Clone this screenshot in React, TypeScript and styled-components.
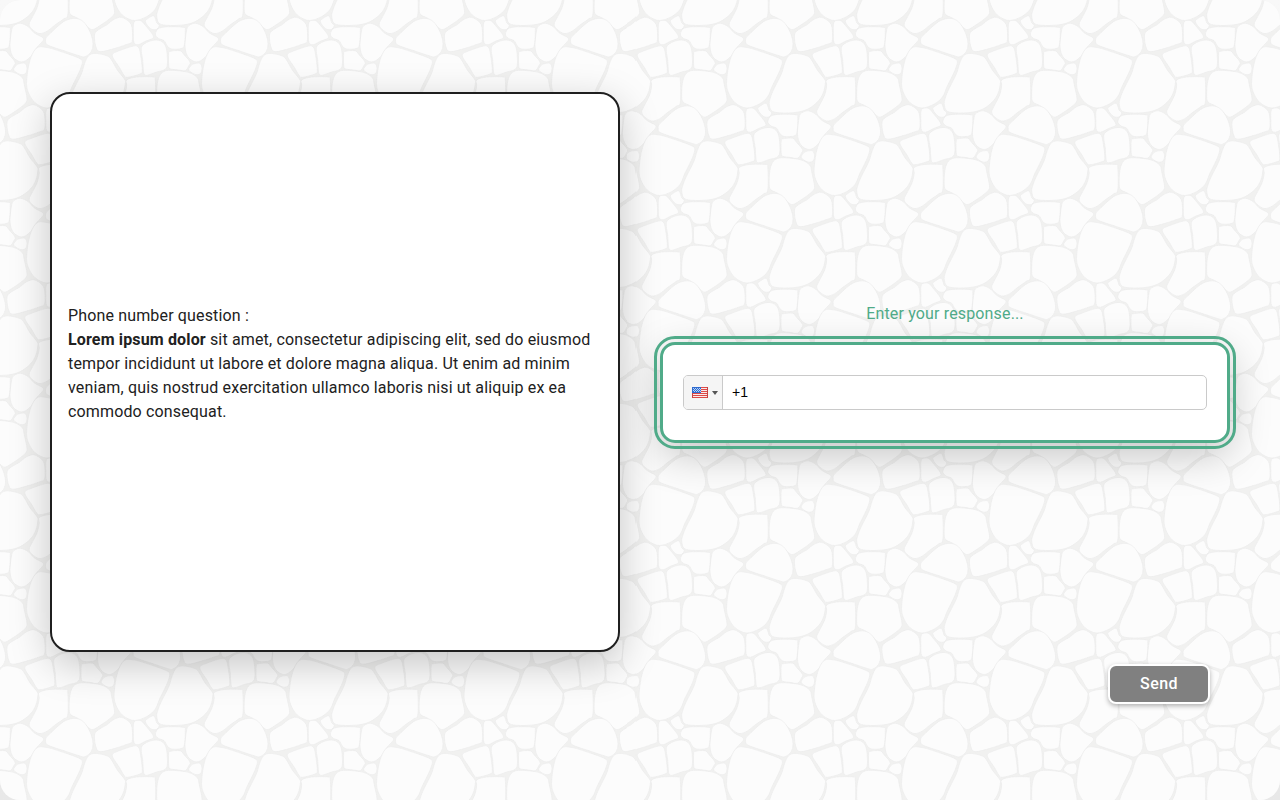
import React, { useState } from 'react';
import styled, { createGlobalStyle } from 'styled-components';

type Point = [number, number];

const deepShadow = '0 12px 40px rgba(0, 0, 0, 0.22)';

const GlobalStyle = createGlobalStyle`
  *, *::before, *::after { box-sizing: border-box; }
  body {
    margin: 0;
    background: #ffffff;
    color: #212121;
    font-family: Roboto, "Liberation Sans", sans-serif;
    font-size: 16px;
    line-height: 24px;
    letter-spacing: 0.00938em;
  }
`;

const Backdrop = styled.div`
  background: linear-gradient(#f8f8f8, #e8e8e8);
`;

const Page = styled.div`
  position: relative;
  min-height: 100vh;
  border-radius: 20px;
  overflow: hidden;
  background: #f1f1f0;
`;

const PebbleLayer = styled.svg`
  position: absolute;
  inset: 0;
  width: 100%;
  height: 100%;
  pointer-events: none;
`;

const Content = styled.main`
  position: relative;
  display: grid;
  grid-template-columns: 1fr 1fr;
  column-gap: 40px;
  padding: 92px 50px 0;
`;

const QuestionCard = styled.section`
  display: flex;
  flex-direction: column;
  justify-content: center;
  height: 70vh;
  padding: 0 16px 16px;
  border: 2px solid #1f1f1f;
  border-radius: 20px;
  background: #ffffff;
  box-shadow: ${deepShadow};
`;

const QuestionText = styled.p`
  margin: 0;
`;

const AnswerColumn = styled.section`
  display: flex;
  flex-direction: column;
  justify-content: center;
  height: 70vh;
`;

const AnswerLabel = styled.label`
  margin-bottom: 15px;
  color: #50ab89;
  line-height: 26px;
  text-align: center;
`;

const AnswerBox = styled.div`
  padding: 30px 20px;
  border: 3px solid #50ab89;
  border-radius: 15px;
  outline: 3px solid #50ab89;
  outline-offset: 3px;
  background: #ffffff;
  box-shadow: ${deepShadow};
`;

const PhoneField = styled.div`
  display: flex;
  height: 35px;
  border: 1px solid #cacaca;
  border-radius: 5px;
  overflow: hidden;
  background: #ffffff;
`;

const CountryButton = styled.button`
  display: flex;
  align-items: center;
  gap: 4px;
  width: 39px;
  padding: 0 0 0 8px;
  border: 0;
  border-right: 1px solid #cacaca;
  background: #f5f5f5;
`;

const Caret = styled.span`
  border-left: 3px solid transparent;
  border-right: 3px solid transparent;
  border-top: 4px solid #555555;
`;

const PhoneInput = styled.input`
  flex: 1;
  min-width: 0;
  padding: 0 9px 2px;
  border: 0;
  outline: 0;
  background: transparent;
  color: #000000;
  font-family: "Liberation Sans", Arial, sans-serif;
  font-size: 14px;
  letter-spacing: 0.01rem;
`;

const Actions = styled.div`
  grid-column: 2;
  display: flex;
  justify-content: flex-end;
  padding: 12px 20px;
`;

const SendButton = styled.button`
  width: 102px;
  height: 40px;
  padding: 0 0 2px;
  border: 2px solid #ffffff;
  border-radius: 8px;
  background: #808080;
  box-shadow: 0 2px 5px rgba(0, 0, 0, 0.3);
  color: #ffffff;
  font-family: inherit;
  font-size: 16px;
  font-weight: 500;
  letter-spacing: 0.02857em;
`;

const STONES: { x: number; y: number; points: Point[] }[] = [
  { x: 240, y: 90, points: [[50, 54], [78, 52], [112, 61], [150, 74], [180, 86], [187, 98], [176, 130], [157, 168], [143, 200], [118, 222], [80, 234], [45, 218], [24, 185], [20, 150], [30, 90]] },
  { x: 240, y: 90, points: [[225, 70], [262, 78], [276, 92], [292, 120], [314, 148], [316, 160], [310, 188], [294, 214], [262, 238], [220, 248], [162, 246], [148, 225], [152, 200], [166, 168], [184, 132], [194, 100], [205, 78]] },
  { x: 510, y: 195, points: [[50, 45], [80, 36], [130, 36], [136, 45], [136, 112], [124, 124], [97, 143], [74, 161], [50, 168], [28, 155], [20, 140], [30, 118], [44, 90], [50, 62]] },
  { x: 510, y: 195, points: [[165, 18], [190, 16], [235, 22], [262, 38], [268, 60], [276, 100], [272, 114], [256, 128], [236, 142], [212, 156], [200, 152], [185, 138], [165, 122], [145, 112], [140, 95], [142, 55], [150, 30]] },
  { x: 0, y: 0, points: [[405, 55], [430, 65], [450, 95], [459, 130], [453, 156], [435, 170], [420, 168], [380, 155], [325, 136], [317, 124], [319, 112], [331, 100], [352, 80], [376, 62]] },
  { x: 450, y: 30, points: [[95, 22], [120, 38], [127, 60], [126, 95], [108, 104], [75, 115], [30, 125], [17, 108], [14, 72], [30, 56], [50, 45], [72, 28]] },
  { x: 450, y: 30, points: [[132, 36], [152, 32], [166, 46], [188, 74], [188, 85], [168, 93], [145, 104], [132, 98], [130, 70]] },
  { x: 450, y: 30, points: [[170, 28], [186, 18], [194, 20], [200, 38], [208, 46], [200, 58], [185, 58], [172, 46], [166, 34]] },
  { x: 450, y: 30, points: [[208, 54], [245, 50], [282, 52], [286, 60], [284, 100], [276, 115], [245, 117], [232, 108], [222, 92], [205, 85], [196, 72]] },
  { x: 0, y: 0, points: [[767, 70], [790, 80], [807, 98], [832, 112], [834, 122], [815, 143], [795, 172], [770, 186], [745, 172], [735, 140], [740, 90], [748, 76]] },
  { x: 450, y: 30, points: [[68, 132], [85, 123], [130, 108], [145, 112], [151, 130], [157, 180], [150, 192], [112, 202], [102, 196], [88, 172], [70, 145]] },
  { x: 450, y: 30, points: [[156, 108], [175, 95], [200, 90], [220, 98], [230, 120], [232, 165], [222, 180], [200, 186], [170, 196], [161, 188], [158, 150], [154, 125]] },
  { x: 450, y: 30, points: [[240, 124], [270, 122], [282, 134], [300, 156], [296, 168], [286, 182], [265, 180], [240, 176], [236, 165], [236, 130]] },
  { x: 450, y: 30, points: [[310, 162], [330, 160], [336, 175], [332, 190], [318, 194], [302, 186], [296, 178], [302, 168]] },
];

// Closed Catmull-Rom curve through the outline points of a stone.
const smooth = (pts: Point[], ox: number, oy: number) => {
  const n = pts.length;
  const at = (i: number): Point => {
    const [x, y] = pts[(i + n) % n];
    return [x + ox, y + oy];
  };
  let d = `M${at(0).join(' ')}`;
  for (let i = 0; i < n; i += 1) {
    const a = at(i - 1);
    const b = at(i);
    const c = at(i + 1);
    const e = at(i + 2);
    d += `C${b[0] + (c[0] - a[0]) / 6} ${b[1] + (c[1] - a[1]) / 6} ${c[0] - (e[0] - b[0]) / 6} ${c[1] - (e[1] - b[1]) / 6} ${c[0]} ${c[1]}`;
  }
  return `${d}Z`;
};

const TILE = 525;
const stonePath = STONES.map((s) => smooth(s.points, s.x, s.y)).join('');
const copies: Point[] = [];
for (let i = -2; i <= 1; i += 1) {
  for (let j = -2; j <= 1; j += 1) {
    copies.push([i * TILE, j * TILE], [(i + 0.5) * TILE, (j + 0.5) * TILE]);
  }
}

const Pebbles = () => (
  <PebbleLayer aria-hidden="true">
    <defs>
      <pattern id="pebbles" width={TILE} height={TILE} patternUnits="userSpaceOnUse" patternTransform="translate(640 0) scale(0.333333)">
        {copies.map(([x, y]) => (
          <path key={`${x},${y}`} d={stonePath} transform={`translate(${x} ${y})`} fill="#fcfcfc" stroke="#ececeb" strokeWidth="2" />
        ))}
      </pattern>
    </defs>
    <rect width="100%" height="100%" fill="url(#pebbles)" />
  </PebbleLayer>
);

const Flag = () => (
  <svg width="16" height="11" viewBox="0 0 16 11" aria-hidden="true" shapeRendering="crispEdges">
    <rect width="16" height="11" fill="#fbe9ea" />
    {[0, 2, 4, 6, 8, 10].map((y) => (
      <rect key={y} y={y} width="16" height="1" fill="#dc4a48" />
    ))}
    <rect width="9" height="6" fill="#2f6bd0" />
    {[1, 3, 5, 7].map((x) => (
      <g key={x} fill="#b9d4f5">
        <rect x={x} y="1" width="1" height="1" />
        <rect x={x} y="3" width="1" height="1" />
        <rect x={x + 1} y="2" width="1" height="1" />
        <rect x={x + 1} y="4" width="1" height="1" />
      </g>
    ))}
    <rect x="15" width="1" height="11" fill="#c8403f" />
    <rect y="6" width="1" height="5" fill="#c8403f" />
  </svg>
);

export default function App() {
  const [phone, setPhone] = useState('+1');
  return (
    <>
      <GlobalStyle />
      <Backdrop>
        <Page>
          <Pebbles />
          <Content>
            <QuestionCard>
              <QuestionText>Phone number question :</QuestionText>
              <QuestionText>
                <strong>Lorem ipsum dolor</strong> sit amet, consectetur adipiscing elit, sed do eiusmod tempor
                incididunt ut labore et dolore magna aliqua. Ut enim ad minim veniam, quis nostrud exercitation
                ullamco laboris nisi ut aliquip ex ea commodo consequat.
              </QuestionText>
            </QuestionCard>
            <AnswerColumn>
              <AnswerLabel htmlFor="phone">Enter your response...</AnswerLabel>
              <AnswerBox>
                <PhoneField>
                  <CountryButton type="button" aria-label="Country: United States">
                    <Flag />
                    <Caret />
                  </CountryButton>
                  <PhoneInput id="phone" type="tel" value={phone} onChange={(e) => setPhone(e.target.value)} />
                </PhoneField>
              </AnswerBox>
            </AnswerColumn>
            <Actions>
              <SendButton type="button">Send</SendButton>
            </Actions>
          </Content>
        </Page>
      </Backdrop>
    </>
  );
}
